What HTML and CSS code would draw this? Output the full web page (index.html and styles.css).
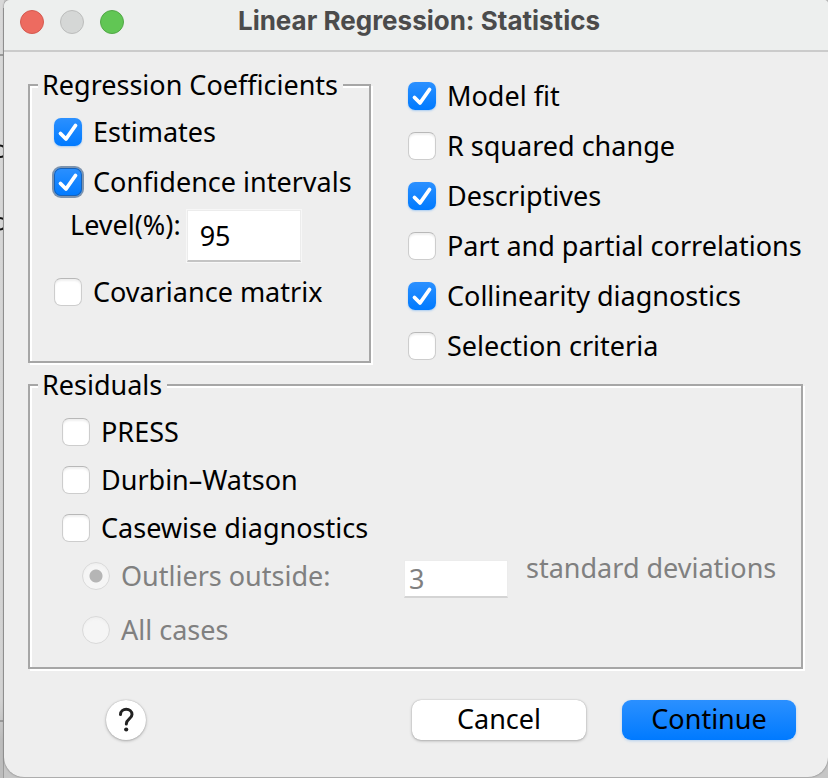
FILE: index.html
```
<!DOCTYPE html>
<html lang="en">
<head>
<meta charset="utf-8">
<title>Linear Regression: Statistics</title>
<link rel="stylesheet" href="styles.css">
</head>
<body>
<svg class="backdrop" width="4" height="778" viewBox="0 0 4 778" aria-hidden="true">
  <path d="M0 55H4M0 721H4" stroke="#999" stroke-width="2"/>
  <path d="M0 145.5Q4 146 4 148M0 157Q4 157 4 155M0 218Q4 218.500 4 220M0 229.500Q4 229 4 227" fill="none" stroke="#111" stroke-width="2"/>
  <path d="M3.500 8V778" stroke="#9c9c9c"/>
</svg>
<svg class="defs" aria-hidden="true"><symbol id="check" viewBox="0 0 28 28"><path d="M6.500 15.500L12 21L21.500 7.500" fill="none" stroke="#fff" stroke-width="3.800" stroke-linecap="round" stroke-linejoin="round"/></symbol></svg>
<div class="window">
  <header class="titlebar">
    <div class="lights">
      <button class="light close" type="button" aria-label="Close"></button>
      <button class="light minimize" type="button" aria-label="Minimize" disabled></button>
      <button class="light zoom" type="button" aria-label="Zoom"></button>
    </div>
    <h1>Linear Regression: Statistics</h1>
  </header>
  <form class="content">
    <div class="top">
      <fieldset class="group coefficients">
        <legend>Regression Coefficients</legend>
        <label class="row"><span class="box"><input type="checkbox" checked><svg><use href="#check"/></svg></span>Estimates</label>
        <label class="row"><span class="box focus"><input type="checkbox" checked><svg><use href="#check"/></svg></span>Confidence intervals</label>
        <div class="level"><label for="level">Level(%):</label><input id="level" type="text" value="95"></div>
        <label class="row"><span class="box"><input type="checkbox"></span>Covariance matrix</label>
      </fieldset>
      <div class="options">
        <label class="row"><span class="box"><input type="checkbox" checked><svg><use href="#check"/></svg></span>Model fit</label>
        <label class="row"><span class="box"><input type="checkbox"></span>R squared change</label>
        <label class="row"><span class="box"><input type="checkbox" checked><svg><use href="#check"/></svg></span>Descriptives</label>
        <label class="row"><span class="box"><input type="checkbox"></span>Part and partial correlations</label>
        <label class="row"><span class="box"><input type="checkbox" checked><svg><use href="#check"/></svg></span>Collinearity diagnostics</label>
        <label class="row"><span class="box"><input type="checkbox"></span>Selection criteria</label>
      </div>
    </div>
    <fieldset class="group residuals">
      <legend>Residuals</legend>
      <label class="row"><span class="box"><input type="checkbox"></span>PRESS</label>
      <label class="row"><span class="box"><input type="checkbox"></span>Durbin–Watson</label>
      <label class="row"><span class="box"><input type="checkbox"></span>Casewise diagnostics</label>
      <div class="outliers">
        <label class="row"><input type="radio" name="cases" checked disabled>Outliers outside:</label>
        <input id="deviations" type="text" value="3" disabled>
        <label class="unit" for="deviations">standard deviations</label>
      </div>
      <label class="row all"><input type="radio" name="cases" disabled>All cases</label>
    </fieldset>
    <footer class="actions">
      <button class="help" type="button" aria-label="Help"><svg width="40" height="40" viewBox="0 0 40 40"><path d="M14.500 14.500C14.500 7.500 26 7.500 26 14.500C26 19 20.300 19 20.300 24" fill="none" stroke="#222" stroke-width="3" stroke-linecap="round"/><circle cx="20.200" cy="29.500" r="2.100" fill="#222"/></svg></button>
      <button class="push" type="button">Cancel</button>
      <button class="push primary" type="submit">Continue</button>
    </footer>
  </form>
</div>
</body>
</html>
```
FILE: styles.css
```
* { box-sizing: border-box; }

body {
  margin: 0;
  display: flex;
  min-height: 100vh;
  overflow: hidden;
  background: #c6c6c6;
  color: #000;
  font: 27px/30px "Noto Sans", sans-serif;
}

.backdrop { flex: none; background: linear-gradient(#d8d8d8, #d2d2d2 700px, #bcbcbc 740px); }
.defs { position: absolute; width: 0; height: 0; }

.window {
  flex: 1;
  min-width: 0;
  margin-bottom: 1px;
  background: #eee;
  border-radius: 6px 4px 20px 20px;
  box-shadow: 0 0 2px #666;
  overflow: hidden;
}

.titlebar {
  display: grid;
  grid-template-columns: 1fr auto 1fr;
  align-items: center;
  height: 52px;
  padding: 0 10px 8px 16px;
  background: #edefee;
  border-bottom: 2px solid #cbcbcb;
}
.titlebar h1 {
  margin: 0;
  color: #4b4b4b;
  font: 700 26px/30px Inter, sans-serif;
}
.lights { display: flex; gap: 16px; padding-top: 2px; }
.light {
  width: 24px;
  height: 24px;
  padding: 0;
  border: 1px solid #d55a50;
  border-radius: 50%;
  background: #ed6b60;
}
.minimize { border-color: #bcbdbc; background: #d5d7d6; }
.zoom { border-color: #52a847; background: #61c654; }

.content { padding: 18px 25px 0 24px; }

.top {
  display: grid;
  grid-template-columns: 343fr 395fr;
  column-gap: 37px;
}

.group {
  min-width: 0;
  margin: 0;
  border: 2px solid #a6a6a6;
  box-shadow: 2px 2px 0 #fff, inset 2px 2px 0 #fff;
}
.group legend {
  padding: 0 5px 0 4px;
  background: #eee;
}
.coefficients { padding: 7px 0 35px 24px; }
.coefficients legend { margin-left: -16px; }
.residuals { margin-top: 7px; padding: 8px 0 7px 32px; }
.residuals legend { margin-left: -24px; }

.row {
  display: flex;
  align-items: center;
  gap: 11px;
  height: 50px;
  white-space: nowrap;
}
.residuals .row { height: 48px; }
.options { height: 293px; padding-top: 1px; }

.box { position: relative; flex: none; display: flex; border-radius: 7px; }
.box svg { position: absolute; inset: 0; width: 28px; height: 28px; pointer-events: none; }
.focus { box-shadow: 0 0 0 2px #7c93ae; }

input[type="checkbox"],
input[type="radio"] {
  appearance: none;
  flex: none;
  width: 28px;
  height: 28px;
  margin: 0;
  border: 1px solid #cdcdcd;
  border-top-color: #b8b8b8;
  border-radius: 7px;
  background: #fff;
  box-shadow: inset 0 2px 2px #f0f0f0;
}
input[type="checkbox"]:checked {
  border: 0;
  background: linear-gradient(#2b90ff, #007aff);
  box-shadow: 0 1px 2px #a8ccf2;
}
.focus input[type="checkbox"]:checked { box-shadow: inset 0 0 0 1px #1661b8; }
input[type="radio"] {
  border-color: #d9d9d9;
  border-radius: 50%;
  background: #f5f5f5;
}
input[type="radio"]:checked { background: radial-gradient(circle, #b5b5b5 6px, #f5f5f5 7px); }

input[type="text"] {
  border: 1px solid #ececec;
  border-radius: 0;
  background: #fff;
  color: #000;
  font: inherit;
}

.level {
  display: flex;
  align-items: flex-start;
  gap: 6px;
  height: 60px;
  padding: 3px 0 0 16px;
}
.level input {
  width: 114px;
  height: 52px;
  padding: 0 12px;
  border-bottom: 2px solid #c4c4c4;
  outline: 1px solid #f7f7f7;
}

.outliers {
  display: flex;
  align-items: center;
  padding-left: 20px;
  color: #808080;
}
.outliers .row { width: 322px; }
.outliers input[type="text"] {
  width: 104px;
  height: 38px;
  margin-top: 5px;
  padding: 0 4px;
  border-bottom: 2px solid #d4d4d4;
  color: #808080;
}
.unit { padding: 0 0 16px 18px; white-space: nowrap; }
.residuals .all { height: 60px; padding-left: 20px; color: #808080; }

.actions {
  display: flex;
  align-items: center;
  gap: 36px;
  padding: 31px 7px 0 78px;
}
button { font: inherit; color: inherit; }
.help,
.push {
  height: 40px;
  padding: 0;
  border: 0;
  background: #fff;
  box-shadow: 0 0 1px #999, 0 1px 3px #aaa;
}
.help { width: 40px; margin-right: auto; border-radius: 50%; }
.help svg { display: block; }
.push { width: 174px; padding-bottom: 2px; border-radius: 9px; }
.primary {
  background: linear-gradient(#2b90ff, #007aff);
  box-shadow: 0 1px 3px #b4d0ee;
}
```
